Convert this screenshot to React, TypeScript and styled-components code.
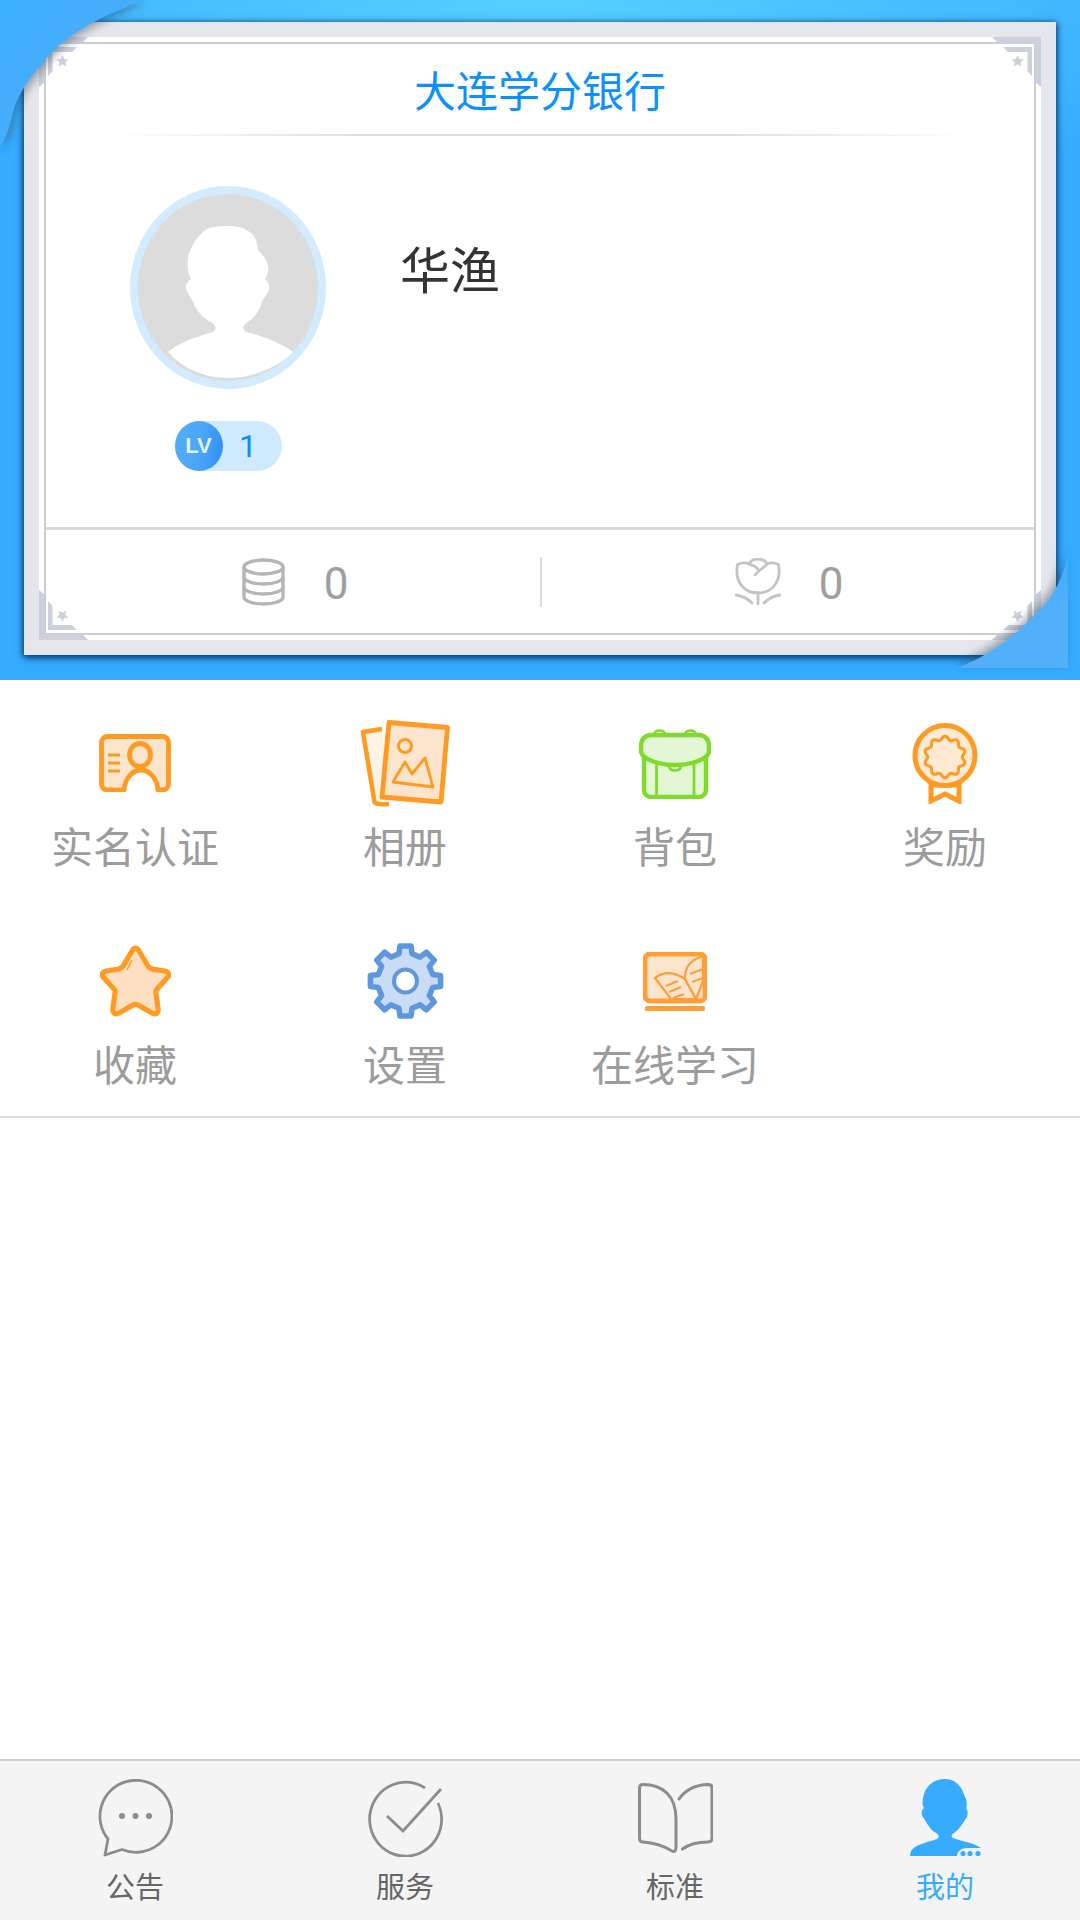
import React from "react";
import styled, { createGlobalStyle } from "styled-components";

const Global = createGlobalStyle`
  html, body { margin: 0; padding: 0; background: #fff; }
  body { font-family: "Noto Sans CJK SC", "Noto Sans", sans-serif; }
  * { box-sizing: border-box; }
`;

const Page = styled.div`
  width: 1080px;
  height: 1920px;
  display: flex;
  flex-direction: column;
  background: #fff;
  overflow: hidden;
`;
const Hero = styled.header`
  position: relative;
  height: 680px;
  padding: 22px 24px 25px;
  overflow: hidden;
  background: radial-gradient(ellipse 75% 30% at 50% 0, #55cfff 0%, #3fb4ff 72%, #36abff 100%), #36abff;
`;
const CardFrame = styled.section`
  height: 633px;
  padding: 15px;
  background: #e4e6eb;
  box-shadow: 0 3px 7px rgba(0, 50, 100, 0.6), -1px 1px 6px rgba(0, 50, 100, 0.55), 1px 1px 6px rgba(0, 50, 100, 0.55);
`;
const CardMat = styled.div`
  position: relative;
  height: 603px;
  padding: 5px 5px 5px;
  background: #fff;
`;
const CardInner = styled.div`
  height: 100%;
  border: 2px solid #c9cdd7;
  display: flex;
  flex-direction: column;
  background: #fff;
`;
const Title = styled.h1`
  margin: 0;
  height: 90px;
  line-height: 90px;
  text-align: center;
  font-size: 42px;
  font-weight: 400;
  color: #0a90ff;
`;
const TitleRule = styled.div`
  height: 2px;
  margin: 0 66px 0 69px;
  background: linear-gradient(90deg, rgba(221, 222, 225, 0), #dddee1 30%, #dddee1 70%, rgba(221, 222, 225, 0));
`;
const Profile = styled.div`
  flex: 1;
  display: flex;
  padding: 50px 0 0 84px;
`;
const AvatarColumn = styled.div`
  width: 196px;
  display: flex;
  flex-direction: column;
  align-items: center;
  gap: 32px;
`;
const LevelPill = styled.div`
  width: 107px;
  height: 50px;
  border-radius: 25px;
  background: #cfe9ff;
  display: flex;
  align-items: center;
`;
const LevelBadge = styled.span`
  width: 48px;
  height: 50px;
  border-radius: 50%;
  background: linear-gradient(100deg, #56adf8 0%, #4aa5f6 55%, #2b8df6 100%);
  color: #dff2ff;
  font: 700 22px/50px "Liberation Sans", sans-serif;
  text-align: center;
`;
const LevelNumber = styled.span`
  flex: 1;
  text-align: center;
  padding-right: 8px;
  color: #0a8fff;
  font: 400 32px/50px Roboto, sans-serif;
`;
const Name = styled.div`
  margin: 46px 0 0 74px;
  font-size: 50px;
  line-height: 70px;
  color: #333;
`;
const Stats = styled.div`
  height: 106px;
  border-top: 3px solid #d8d9db;
  display: flex;
  align-items: center;
`;
const Stat = styled.div<{ $gap: number; $shift: number }>`
  flex: 1;
  display: flex;
  align-items: center;
  justify-content: center;
  gap: ${(p) => p.$gap}px;
  padding-left: ${(p) => p.$shift}px;
  font: 400 44px/50px Roboto, sans-serif;
  color: #9e9e9e;
`;
const StatValue = styled.span`
  margin-top: 4px;
`;
const StatRule = styled.div`
  width: 2px;
  height: 50px;
  background: #dcdcdc;
`;
const CornerSlot = styled.svg<{ $v: "top" | "bottom"; $h: "left" | "right" }>`
  position: absolute;
  ${(p) => p.$v}: 0;
  ${(p) => p.$h}: 0;
  transform: scale(${(p) => (p.$h === "right" ? 1 : -1)}, ${(p) => (p.$v === "top" ? 1 : -1)});
`;
const Peel = styled.svg<{ $corner: "tl" | "br" }>`
  position: absolute;
  overflow: visible;
  ${(p) => (p.$corner === "tl" ? "left: 0; top: 0;" : "left: 950px; top: 552px;")}
  filter: drop-shadow(${(p) => (p.$corner === "tl" ? "3px 3px 4px" : "-3px -3px 4px")} rgba(40, 60, 80, 0.42));
`;
const Grid = styled.nav`
  display: grid;
  grid-template-columns: repeat(4, 270px);
  grid-auto-rows: 218px;
  border-bottom: 2px solid #dcdcdc;
`;
const GridItem = styled.div`
  display: flex;
  flex-direction: column;
  align-items: center;
  padding-top: 37px;
`;
const GridIcon = styled.div`
  height: 92px;
  display: flex;
  align-items: center;
  justify-content: center;
`;
const GridLabel = styled.div`
  font-size: 42px;
  line-height: 71px;
  color: #9c9c9c;
  white-space: nowrap;
`;
const Filler = styled.div`
  flex: 1;
`;
const TabBar = styled.footer`
  height: 161px;
  border-top: 2px solid #cfcfcf;
  background: #f4f4f4;
  display: grid;
  grid-template-columns: repeat(4, 270px);
`;
const Tab = styled.div`
  display: flex;
  flex-direction: column;
  align-items: center;
  padding-top: 17px;
`;
const TabIcon = styled.div`
  height: 80px;
  display: flex;
  align-items: center;
  justify-content: center;
`;
const TabLabel = styled.div<{ $active?: boolean }>`
  font-size: 29px;
  line-height: 52px;
  margin-top: 1px;
  color: ${(p) => (p.$active ? "#36abff" : "#666")};
`;

const ORANGE = "#ff9a22";
const PEACH = "#fde4cc";

const Corner = ({ v, h }: { v: "top" | "bottom"; h: "left" | "right" }) => (
  <CornerSlot $v={v} $h={h} width="50" height="50" viewBox="0 0 50 50">
    <path d="M1 0H50V50L44 45V6H7Z" fill="#cbd0da" />
    <path d="M12 10H41V39L36.5 34V15H17Z" fill="#cbd0da" />
    <path d="M26.5 18l1.9 4 4.4.4-3.3 2.9 1 4.3-4-2.3-3.8 2.3 1-4.3-3.3-2.9 4.4-.4Z" fill="#cbd0da" />
  </CornerSlot>
);

const Avatar = () => (
  <svg width="196" height="203" viewBox="0 0 196 203">
    <ellipse cx="98" cy="101.5" rx="94" ry="97.5" fill="#dcdcdc" stroke="#d2ebff" strokeWidth="8" />
    <path
      fill="#fff"
      d="M98 40C86 40 78 41 73 46C66 52 60 62 58 72C57 81 58 88 61 93C57 96 55 99 56 103C58 108 61 111 63 116C66 124 72 131 79 135C84 138 87 140 85 144C83 147 78 147 70 150C58 154 46 159 38 166C50 180 72 192 98 192C124 192 150 180 163 166C154 159 142 154 130 150C122 147 116 147 114 144C112 140 115 138 119 135C126 131 129 124 132 116C134 111 138 108 139 103C140 99 138 96 135 93C138 88 139 85 138 80C137 73 132 69 128 64C127 58 127 53 122 48C116 42 108 40 98 40Z"
    />
  </svg>
);

const Coins = () => (
  <svg width="43" height="48" viewBox="0 0 43 48" fill="none" stroke="#b5b5b5" strokeWidth="3.4">
    <ellipse cx="21.5" cy="9" rx="19.5" ry="7" />
    <path d="M2 9V39C2 43 11 46 21.5 46S41 43 41 39V9" />
    <path d="M2 19C2 23 11 26 21.5 26S41 23 41 19" />
    <path d="M2 29C2 33 11 36 21.5 36S41 33 41 29" />
  </svg>
);

const Tulip = () => (
  <svg width="46" height="47" viewBox="0 0 46 47" fill="none" stroke="#c4c4c4" strokeWidth="2.8" strokeLinecap="round" strokeLinejoin="round">
    <path d="M14 6C10 4 6 5 2.5 6.5C1 14 2 22 7 28C11 33 17 35 23 35C29 35 35 33 39 28C44 22 45 14 43.5 6.5C40 5 36 4 32 6" />
    <path d="M14 6C16 2 20 1 23 1C27 1 30 2 32 6C30 9 24 12 20 17" />
    <path d="M14 6C18 7 21 9 23 11" />
    <path d="M1 37C8 38 13 41 17 45M45 37C38 38 33 41 29 45M23 35V46" />
  </svg>
);

const IdCard = () => (
  <svg width="72" height="58" viewBox="0 0 72 58" fill={PEACH} stroke={ORANGE} strokeWidth="4.8">
    <path d="M25 56H8A6 6 0 0 1 2.5 50V8A6 6 0 0 1 8 2.5H64A6 6 0 0 1 69.5 8V50A6 6 0 0 1 64 56H59C58 44 50 36 42 36C34 36 26 44 25 56Z" strokeLinejoin="round" />
    <ellipse cx="41" cy="21" rx="10.5" ry="11.5" />
    <path d="M9 21H21M9 29H21M9 37H21" fill="none" strokeWidth="3" />
  </svg>
);

const Photos = () => (
  <svg width="90" height="87" viewBox="0 0 90 87" fill={PEACH} stroke={ORANGE} strokeLinejoin="round">
    <path d="M22 9L3 12L14.5 82Q15.5 85 29 84" fill="#fff3e6" strokeWidth="4.6" />
    <path d="M29 2.5L87.5 7.5L81 82L22 77Z" strokeWidth="4.8" />
    <circle cx="45" cy="26" r="6.5" fill="none" strokeWidth="3" />
    <path d="M33 62L45 42L52 54L65 38L73 67Z" fill="none" strokeWidth="2.8" />
  </svg>
);

const Backpack = () => (
  <svg width="72" height="71" viewBox="0 0 72 71" fill="#e3f6d6" stroke="#7edb2c" strokeWidth="4.4" strokeLinejoin="round">
    <path d="M15 7C15 1 26 1 26 7M46 7C46 1 57 1 57 7" fill="none" strokeWidth="2.6" />
    <path d="M5 28V62A7 7 0 0 0 12 69H60A7 7 0 0 0 67 62V28Z" />
    <path d="M17.5 36V68M55 36V68" fill="none" strokeWidth="2.8" />
    <path d="M12 7H60A10 10 0 0 1 70 17V23C70 31 52 37 36 37S2 31 2 23V17A10 10 0 0 1 12 7Z" />
    <path d="M30 38C31 44 41 44 42 38" fill="none" strokeWidth="2.6" />
  </svg>
);

const scallop = (cx: number, cy: number, r: number, amp: number, n: number) => {
  const pts: string[] = [];
  for (let i = 0; i < 120; i++) {
    const a = (i / 120) * Math.PI * 2;
    const rr = r + amp * Math.cos(a * n);
    pts.push(`${(cx + rr * Math.sin(a)).toFixed(2)} ${(cy - rr * Math.cos(a)).toFixed(2)}`);
  }
  return `M${pts.join("L")}Z`;
};

const Medal = () => (
  <svg width="66" height="81" viewBox="0 0 66 81" fill="#fee9d3" stroke={ORANGE} strokeWidth="5">
    <path d="M19 60V78L33 71L47 78V60" fill="#fff" strokeLinejoin="miter" />
    <path d="M18 62H48" fill="none" />
    <circle cx="33" cy="32.5" r="30" />
    <path d={scallop(33, 34, 19, 1.8, 10)} fill="#fee9d3" strokeWidth="3" />
  </svg>
);

const Star = () => (
  <svg width="71" height="72" viewBox="0 0 71 72" fill="#fedfc1" stroke={ORANGE} strokeWidth="5.2" strokeLinejoin="round">
    <path d="M35.5 3C37 3 38 4 39 6L48 21C49 23 50 23 52 24L65 26C69 27 70 30 67 33L57 44C56 45 55 46 56 48L58 63C59 68 56 70 52 68L38 60C36 59 35 59 33 60L19 68C15 70 12 68 13 63L15 48C16 46 15 45 14 44L4 33C1 30 2 27 6 26L19 24C21 23 22 23 23 21L32 6C33 4 34 3 35.5 3Z" />
    <path d="M27 25L32 15" fill="none" strokeWidth="1.6" />
  </svg>
);

const gear = (cx: number, cy: number, r1: number, r2: number, n: number) => {
  const step = (Math.PI * 2) / n;
  const p = (a: number, r: number) => `${(cx + r * Math.sin(a)).toFixed(2)} ${(cy - r * Math.cos(a)).toFixed(2)}`;
  const out: string[] = [];
  for (let i = 0; i < n; i++) {
    const a = i * step;
    out.push(p(a - step * 0.3, r1), p(a - step * 0.2, r2), p(a + step * 0.2, r2), p(a + step * 0.3, r1));
  }
  return `M${out.join("L")}Z`;
};

const Gear = () => (
  <svg width="77" height="78" viewBox="0 0 77 78" fill="#c9dcf5" stroke="#5f97df" strokeWidth="5.6" strokeLinejoin="round">
    <path d={gear(38.5, 39, 28, 35.5, 8)} />
    <circle cx="38.5" cy="39" r="11.5" fill="#fff" strokeWidth="4" />
  </svg>
);

const Laptop = () => (
  <svg width="64" height="59" viewBox="0 0 64 59" fill="#fde4cc" stroke="#ff9e36" strokeWidth="2.2" strokeLinejoin="round">
    <rect x="2" y="2" width="60" height="47" rx="5" strokeWidth="4.8" />
    <path d="M12 26Q25 16 42 27L53 47H28Z" />
    <path d="M42 27Q41 10 60 4V29L53 47Z" />
    <path d="M23 34L35 29M26 40L38 35M30 46L41 42M47 22L60 17M49 30L60 26" fill="none" />
    <rect x="2" y="54" width="60" height="5" rx="1.5" fill="#ff9e36" stroke="none" />
  </svg>
);

const Bubble = () => (
  <svg width="75" height="78" viewBox="0 0 75 78" fill="none" stroke="#8c8c8c" strokeWidth="2.8" strokeLinejoin="round">
    <path d="M10 60A36 36 0 1 1 24 70.5L7 76Z" />
    <g fill="#8c8c8c" stroke="none">
      <circle cx="24" cy="37" r="3" />
      <circle cx="37.5" cy="37" r="3" />
      <circle cx="51" cy="37" r="3" />
    </g>
  </svg>
);

const Check = () => (
  <svg width="75" height="78" viewBox="0 0 75 78" fill="none" stroke="#8c8c8c" strokeWidth="2.8">
    <path d="M57 9A36 37 0 1 0 70 24" />
    <path d="M19 37L35 52L73 10" />
  </svg>
);

const Book = () => (
  <svg width="75" height="70" viewBox="0 0 75 70" fill="none" stroke="#8c8c8c" strokeWidth="3" strokeLinecap="round">
    <path d="M34 68Q21 60 5 59Q1.5 59 1.5 55V5Q1.5 1.5 5 1.5C24 1.5 38 12 38 36V64Q38 70 34 68Z" />
    <path d="M41 16Q51 2 70 1.5Q74 1.5 74 5V55Q74 59 70 59Q54 59 44.5 66" />
  </svg>
);

const Person = () => (
  <svg width="71" height="78" viewBox="0 0 71 78">
    <path
      fill="#36abff"
      d="M35 0C24 0 15 7 13 19C12 25 13 27 14 29C11 32 11 35 13 38C16 42 19 50 26 54C29 56 30 58 27 60C18 63 4 66 1 72L0 77H47C47 72 52 69 57 69H71C62 63 50 62 43 59C41 58 41 56 44 54C50 50 54 42 57 38C58 35 58 32 56 29C57 27 57 24 56 20C54 16 53 12 51 9C47 3 42 0 35 0Z"
    />
    <g fill="#36abff">
      <circle cx="53" cy="74.5" r="2.6" />
      <circle cx="60" cy="74.5" r="2.6" />
      <circle cx="68" cy="74.5" r="2.6" />
    </g>
  </svg>
);

const gridItems = [
  { label: "实名认证", icon: <IdCard /> },
  { label: "相册", icon: <Photos /> },
  { label: "背包", icon: <Backpack /> },
  { label: "奖励", icon: <Medal /> },
  { label: "收藏", icon: <Star /> },
  { label: "设置", icon: <Gear /> },
  { label: "在线学习", icon: <Laptop /> },
];

const tabs = [
  { label: "公告", icon: <Bubble /> },
  { label: "服务", icon: <Check /> },
  { label: "标准", icon: <Book /> },
  { label: "我的", icon: <Person />, active: true },
];

export default function App() {
  return (
    <Page>
      <Global />
      <Hero>
        <CardFrame>
          <CardMat>
            <CardInner>
              <Title>大连学分银行</Title>
              <TitleRule />
              <Profile>
                <AvatarColumn>
                  <Avatar />
                  <LevelPill>
                    <LevelBadge>LV</LevelBadge>
                    <LevelNumber>1</LevelNumber>
                  </LevelPill>
                </AvatarColumn>
                <Name>华渔</Name>
              </Profile>
              <Stats>
                <Stat $gap={39} $shift={4}>
                  <Coins />
                  <StatValue>0</StatValue>
                </Stat>
                <StatRule />
                <Stat $gap={38} $shift={2}>
                  <Tulip />
                  <StatValue>0</StatValue>
                </Stat>
              </Stats>
            </CardInner>
            <Corner v="top" h="right" />
            <Corner v="bottom" h="left" />
            <Corner v="top" h="left" />
            <Corner v="bottom" h="right" />
          </CardMat>
        </CardFrame>
        <Peel $corner="tl" width="150" height="150" viewBox="0 0 150 150">
          <defs>
            <linearGradient id="peelTl" x1="0" y1="0" x2="1" y2="1">
              <stop offset="0" stopColor="#3bb2ff" />
              <stop offset="0.3" stopColor="#44aefc" />
            </linearGradient>
          </defs>
          <path d="M0 0H146C138 1 130 5 122 9C100 18 66 34 45 60C30 78 17 94 12 116C10 126 6 138 0 146Z" fill="url(#peelTl)" />
        </Peel>
        <Peel $corner="br" width="118" height="116" viewBox="0 0 118 116">
          <defs>
            <linearGradient id="peelBr" x1="0" y1="0" x2="0" y2="1">
              <stop offset="0" stopColor="#3aacfe" />
              <stop offset="0.45" stopColor="#52b0fb" />
            </linearGradient>
          </defs>
          <path d="M117 5C112 30 100 50 86 61C70 80 40 104 7 116H118V5Z" fill="url(#peelBr)" />
        </Peel>
      </Hero>
      <Grid>
        {gridItems.map((it) => (
          <GridItem key={it.label}>
            <GridIcon>{it.icon}</GridIcon>
            <GridLabel>{it.label}</GridLabel>
          </GridItem>
        ))}
      </Grid>
      <Filler />
      <TabBar>
        {tabs.map((t) => (
          <Tab key={t.label}>
            <TabIcon>{t.icon}</TabIcon>
            <TabLabel $active={t.active}>{t.label}</TabLabel>
          </Tab>
        ))}
      </TabBar>
    </Page>
  );
}
